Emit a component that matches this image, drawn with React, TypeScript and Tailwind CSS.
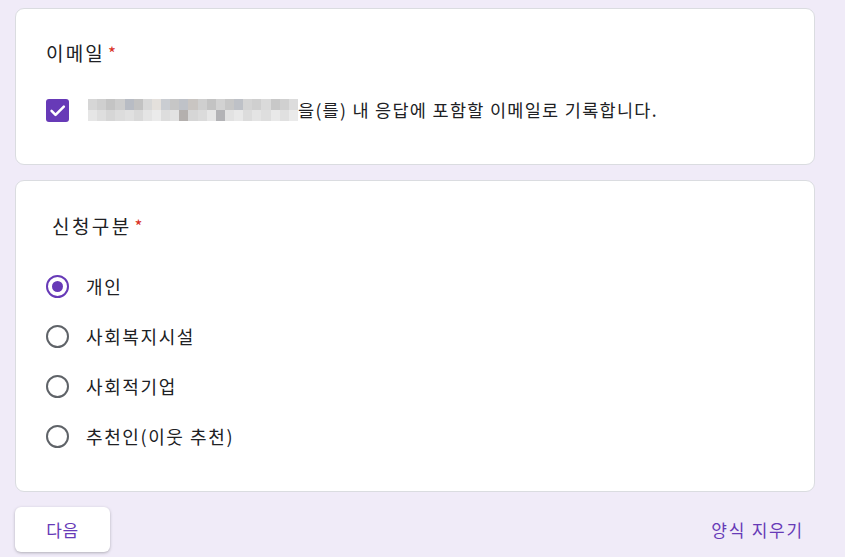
import React from "react";

const font = { fontFamily: '"Noto Sans CJK KR", "Noto Sans", sans-serif' };

// pixelated (mosaic) email placeholder
const row1 = [
  "#d6d6d6", "#cfcfcf", "#c4c4c4", "#cdcdcd", "#b8bcc4", "#c2c2c2", "#d8d8d8", "#e4e0dc",
  "#cacdd2", "#c6c6c6", "#bfc2c8", "#c9c5c2", "#cfcfcf", "#c3c3c3", "#d2d2d2", "#c7c7c7",
  "#bec1c7", "#d4d4d4", "#cfcfcf", "#dadada", "#c8c8c8", "#d0d0d0", "#dcdcdc",
];
const row2 = [
  "#e6e6e6", "#dedede", "#d6d6d6", "#dcdcdc", "#e0e0e0", "#d9d9d9", "#e4e4e4", "#ebebeb",
  "#dddddd", "#e2e2e2", "#b4b0ae", "#d6d6d6", "#dbdbdb", "#e6e6e6", "#b3b3b6", "#e2e2e2",
  "#e8e8e8", "#dcdcdc", "#e4e4e4", "#dedede", "#e9e9e9", "#e0e0e0", "#eaeaea",
];

const Mosaic: React.FC = () => (
  <div className="grid grid-cols-[repeat(23,1fr)] w-[210px] h-[22px]">
    {[...row1, ...row2].map((c, i) => (
      <div key={i} style={{ backgroundColor: c }} />
    ))}
  </div>
);

const Radio: React.FC<{ checked?: boolean; label: string }> = ({ checked, label }) => (
  <div className="flex items-center h-[50px]">
    <div
      className={`w-[23px] h-[23px] rounded-full border-2 flex items-center justify-center ${
        checked ? "border-[#673ab7]" : "border-[#5f6368]"
      }`}
    >
      {checked && <div className="w-[11px] h-[11px] rounded-full bg-[#673ab7]" />}
    </div>
    <span className="ml-[17px] text-[18px] text-[#202124] tracking-[1.6px]">{label}</span>
  </div>
);

const Required = () => <span className="ml-[3px] text-[#d93025] text-[17px]">*</span>;

export default function App() {
  return (
    <div className="min-h-[557px] bg-[#f0ebf8] pt-[8px] px-[15px] pr-[30px]" style={font}>
      <div className="bg-white border border-[#dadce0] rounded-[9px] h-[157px] pl-[30px] pt-[30px]">
        <div className="flex items-center h-[28px] text-[19px] text-[#202124] tracking-[2.2px]">
          이메일
          <Required />
        </div>
        <div className="flex items-center mt-[30px]">
          <div className="w-[23px] h-[23px] rounded-[3px] bg-[#673ab7] flex items-center justify-center">
            <svg width="19" height="19" viewBox="0 0 24 24" fill="none">
              <path d="M4.5 12.5l5 5L20 7" stroke="white" strokeWidth="3.2" strokeLinecap="round" strokeLinejoin="round" />
            </svg>
          </div>
          <div className="ml-[19px]">
            <Mosaic />
          </div>
          <span className="text-[17.5px] text-[#202124] tracking-[1.3px]">
            을(를) 내 응답에 포함할 이메일로 기록합니다.
          </span>
        </div>
      </div>

      <div className="mt-[15px] bg-white border border-[#dadce0] rounded-[9px] h-[312px] pl-[30px] pt-[31px]">
        <div className="flex items-center h-[28px] pl-[6px] text-[19px] text-[#202124] tracking-[2.4px]">
          신청구분
          <Required />
        </div>
        <div className="mt-[21px] flex flex-col">
          <Radio checked label="개인" />
          <Radio label="사회복지시설" />
          <Radio label="사회적기업" />
          <Radio label="추천인(이웃 추천)" />
        </div>
      </div>

      <div className="mt-[15px] flex items-center justify-between">
        <button className="w-[95px] h-[45px] bg-white rounded-[6px] shadow-[0_1px_3px_rgba(60,64,67,0.35)] text-[#673ab7] text-[17px] tracking-[0.5px]">
          다음
        </button>
        <span className="mr-[11px] text-[#673ab7] text-[17px] tracking-[1.8px]">양식 지우기</span>
      </div>
    </div>
  );
}
